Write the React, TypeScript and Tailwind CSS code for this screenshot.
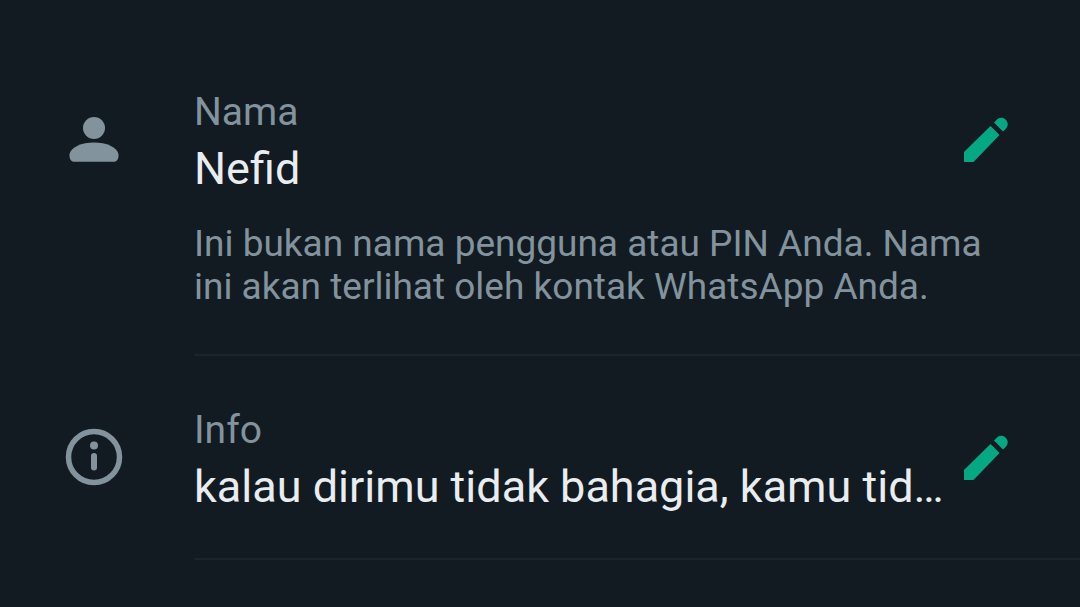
import type { ReactNode } from "react";

const PersonIcon = () => (
  <svg viewBox="0 0 60 60" className="size-[60px] fill-[#83939d]" aria-hidden="true">
    <circle cx="30" cy="18" r="11" />
    <path d="M5.5 44.5C6.500 37 18 32.500 30 32.500s23.500 4.500 24.500 12c.3 4.500-1.500 7.300-5 7.300h-39c-3.500 0-5.300-2.800-5-7.300z" />
  </svg>
);

const InfoIcon = () => (
  <svg viewBox="0 0 60 60" className="size-[60px]" aria-hidden="true">
    <circle cx="30" cy="29" r="25.500" fill="none" stroke="#83939d" strokeWidth="5.500" />
    <circle cx="30" cy="17.500" r="4" fill="#83939d" />
    <path d="M30 28v11.500" stroke="#83939d" strokeWidth="6" strokeLinecap="round" />
  </svg>
);

const PencilIcon = () => (
  <svg viewBox="0 0 60 60" className="size-[60px] fill-[#06a884]" aria-hidden="true">
    <path d="M8 52V42L34.500 16l9 9L17.500 52z" />
    <path d="M38 12.500l2.500-2.500c2.800-2.800 6.500-2.800 9.200-.2 2.700 2.700 2.700 6.400 0 9.200L47 21.500z" />
  </svg>
);

type RowProps = {
  icon: ReactNode;
  label: string;
  value: string;
  hint?: string;
};

const ProfileRow = ({ icon, label, value, hint }: RowProps) => (
  <section className="flex pl-16 gap-[70px]">
    <div className="flex h-[110px] shrink-0 items-center">{icon}</div>

    <div className="min-w-0 flex-1 border-b-2 border-[#1b252c] pb-[46px]">
      <div className="flex items-center justify-between pr-16">
        <div className="flex min-w-0 flex-col gap-1">
          <h2 className="text-[39px] leading-[55px] text-[#83939d]">{label}</h2>
          <p className="whitespace-nowrap text-[45px] leading-[50px] text-[#e9edf0]">{value}</p>
        </div>
        <button type="button" aria-label={`Edit ${label}`} className="shrink-0">
          <PencilIcon />
        </button>
      </div>

      {hint && (
        <p className="mt-7 pr-[90px] text-[37px] leading-[43px] text-[#83939d]">{hint}</p>
      )}
    </div>
  </section>
);

export default function App() {
  return (
    <main className="flex min-h-screen flex-col gap-[47px] bg-[#121b22] pt-[85px] font-['Roboto',sans-serif]">
      <ProfileRow
        icon={<PersonIcon />}
        label="Nama"
        value="Nefid"
        hint="Ini bukan nama pengguna atau PIN Anda. Nama ini akan terlihat oleh kontak WhatsApp Anda."
      />
      <ProfileRow
        icon={<InfoIcon />}
        label="Info"
        value="kalau dirimu tidak bahagia, kamu tid…"
      />
    </main>
  );
}
